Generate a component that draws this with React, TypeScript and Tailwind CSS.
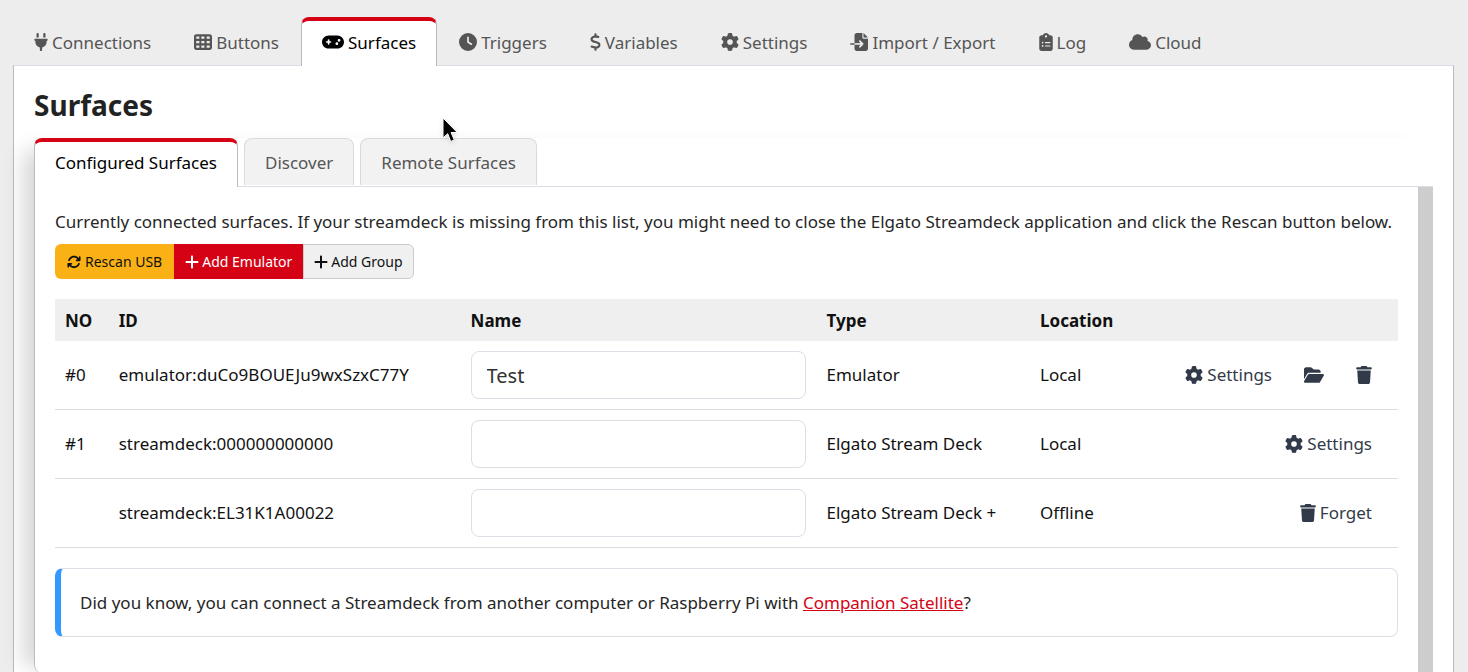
import type { ReactNode } from 'react'
import type { IconType } from 'react-icons'
import {
  FaArrowsRotate,
  FaClipboardList,
  FaClock,
  FaCloud,
  FaDollarSign,
  FaFileImport,
  FaFolderOpen,
  FaGamepad,
  FaGear,
  FaPlug,
  FaPlus,
  FaTableCells,
  FaTrash,
} from 'react-icons/fa6'

const mainTabs: { label: string; icon: IconType; size: string; active?: boolean }[] = [
  { label: 'Connections', icon: FaPlug, size: 'w-[14px]' },
  { label: 'Buttons', icon: FaTableCells, size: 'w-[18px]' },
  { label: 'Surfaces', icon: FaGamepad, size: 'w-[22px]', active: true },
  { label: 'Triggers', icon: FaClock, size: 'w-[18px]' },
  { label: 'Variables', icon: FaDollarSign, size: 'w-[11px]' },
  { label: 'Settings', icon: FaGear, size: 'w-[18px]' },
  { label: 'Import / Export', icon: FaFileImport, size: 'w-[18px]' },
  { label: 'Log', icon: FaClipboardList, size: 'w-[14px]' },
  { label: 'Cloud', icon: FaCloud, size: 'w-[22px]' },
]

const surfaces = [
  { no: '#0', id: 'emulator:duCo9BOUEJu9wxSzxC77Y', name: 'Test', type: 'Emulator', location: 'Local' },
  { no: '#1', id: 'streamdeck:000000000000', name: '', type: 'Elgato Stream Deck', location: 'Local' },
  { no: '', id: 'streamdeck:EL31K1A00022', name: '', type: 'Elgato Stream Deck +', location: 'Offline' },
]

function ActionButton({
  icon: Icon,
  size,
  label,
  children,
}: {
  icon: IconType
  size: string
  label?: string
  children?: ReactNode
}) {
  return (
    <button type="button" aria-label={label} className="flex h-12 items-center gap-1 px-4 text-[#323a49]">
      <Icon className={`h-[18px] shrink-0 ${size}`} />
      {children}
    </button>
  )
}

export default function App() {
  return (
    <div className="flex h-screen flex-col overflow-hidden bg-[#ededed] pt-[17px] pr-[14px] pl-[13px] font-['Noto_Sans',sans-serif] text-[17px] leading-[26px] text-[#262626]">
      <nav className="relative z-10 -mb-px flex shrink-0 gap-px">
        {mainTabs.map(({ label, icon: Icon, size, active }) => (
          <a
            key={label}
            href="#"
            className={
              active
                ? 'flex h-[49px] items-center gap-1 rounded-t-lg border-x border-t-4 border-x-[#b9bbbe] border-t-[#d50215] bg-white px-5 pb-[2px] text-black'
                : 'flex h-[49px] items-center gap-1 border-x border-t-4 border-transparent px-5 pb-[2px] text-[#555]'
            }
          >
            <Icon className={`mb-[2px] h-[18px] shrink-0 ${size}`} />
            {label}
          </a>
        ))}
      </nav>

      <main className="flex-1 border border-x-[#b9bbbe] border-t-[#d8dde6] bg-white px-5 pt-5">
        <h1 className="mb-[14px] text-[28px] leading-[38px] font-bold text-[#222]">Surfaces</h1>

        <div className="rounded-lg bg-white shadow-[-20px_3px_20px_-10px_rgba(0,0,0,0.17)]">
          <nav className="relative z-10 -mb-px flex gap-[6px]">
            <a
              href="#"
              className="flex h-[49px] items-center rounded-t-lg border-x border-t-4 border-x-[#b9bbbe] border-t-[#d50215] bg-white px-5 pb-1 text-black"
            >
              Configured Surfaces
            </a>
            <a
              href="#"
              className="flex h-[47px] items-center rounded-t-lg border border-b-0 border-[#d8dadd] bg-[#f2f2f2] px-5 pt-[2px] text-[#555]"
            >
              Discover
            </a>
            <a
              href="#"
              className="flex h-[47px] items-center rounded-t-lg border border-b-0 border-[#d8dadd] bg-[#f2f2f2] px-5 pt-[2px] text-[#555]"
            >
              Remote Surfaces
            </a>
          </nav>

          <div className="flex rounded-b-lg border-t border-l border-t-[#d8dde6] border-l-[#b9bbbe] bg-white">
            <section className="min-w-0 flex-1 px-5 pt-[22px] pb-9">
              <p className="mb-[9px]">
                Currently connected surfaces. If your streamdeck is missing from this list, you might need to close the
                Elgato Streamdeck application and click the Rescan button below.
              </p>

              <div className="flex h-[35px] text-sm text-[#111]">
                <button type="button" className="flex items-center gap-1 rounded-l-md bg-[#fab116] px-3">
                  <FaArrowsRotate className="size-[14px]" />
                  Rescan USB
                </button>
                <button type="button" className="flex items-center gap-[3px] bg-[#d50215] px-[11px] text-white">
                  <FaPlus className="h-4 w-[14px]" />
                  Add Emulator
                </button>
                <button
                  type="button"
                  className="flex items-center gap-[3px] rounded-r-md border border-[#ccc] bg-[#f0f0f0] px-[10px]"
                >
                  <FaPlus className="h-4 w-[14px]" />
                  Add Group
                </button>
              </div>

              <table className="mt-5 w-full table-fixed border-collapse text-left text-[#111]">
                <thead>
                  <tr className="h-[42px] bg-[#efefef]">
                    <th className="w-[4%] px-[10px] pt-[2px]">NO</th>
                    <th className="w-[26.2%] px-[10px] pt-[2px]">ID</th>
                    <th className="w-[26.5%] px-[10px] pt-[2px]">Name</th>
                    <th className="w-[15.9%] px-[10px] pt-[2px]">Type</th>
                    <th className="w-[8%] px-[10px] pt-[2px]">Location</th>
                    <th aria-label="Actions" />
                  </tr>
                </thead>
                <tbody>
                  {surfaces.map((s, i) => (
                    <tr key={s.id} className="border-b border-[#dcdcdc]">
                      <td className="px-[10px]">{s.no}</td>
                      <td className="px-[10px]">{s.id}</td>
                      <td className="px-[10px] py-[10px]">
                        <input
                          type="text"
                          aria-label={`Name of ${s.id}`}
                          defaultValue={s.name}
                          className="block h-12 w-full rounded-lg border border-[#dbdfe6] bg-white px-[15px] text-xl text-[#333]"
                        />
                      </td>
                      <td className="px-[10px]">{s.type}</td>
                      <td className="px-[10px]">{s.location}</td>
                      <td className="px-[10px]">
                        <div className="flex justify-end">
                          {i < 2 && (
                            <ActionButton icon={FaGear} size="w-[18px]">
                              Settings
                            </ActionButton>
                          )}
                          {i === 0 && <ActionButton icon={FaFolderOpen} size="w-5" label="Expand" />}
                          {i === 0 && <ActionButton icon={FaTrash} size="w-4" label="Remove" />}
                          {i === 2 && (
                            <ActionButton icon={FaTrash} size="w-4">
                              Forget
                            </ActionButton>
                          )}
                        </div>
                      </td>
                    </tr>
                  ))}
                </tbody>
              </table>

              <div className="mt-5 rounded-lg border border-l-[6px] border-[#dbdfe6] border-l-[#3399ff] pt-[21px] pb-5 pl-[19px]">
                Did you know, you can connect a Streamdeck from another computer or Raspberry Pi with{' '}
                <a href="#" className="text-[#d50215] underline">
                  Companion Satellite
                </a>
                ?
              </div>
            </section>
            <div className="w-[15px] shrink-0 bg-[#cdcdcd]" />
          </div>
        </div>
      </main>

      <svg className="absolute top-[115px] left-[440px] z-20 h-8 w-6 drop-shadow-sm" viewBox="0 0 24 32" aria-hidden="true">
        <path
          d="M3 3v20l4.700-4.300 3 7.800 3.600-1.500-3.200-7.500h6.200z"
          fill="#000"
          stroke="#fff"
          strokeWidth="1"
          strokeLinejoin="round"
        />
      </svg>
    </div>
  )
}
